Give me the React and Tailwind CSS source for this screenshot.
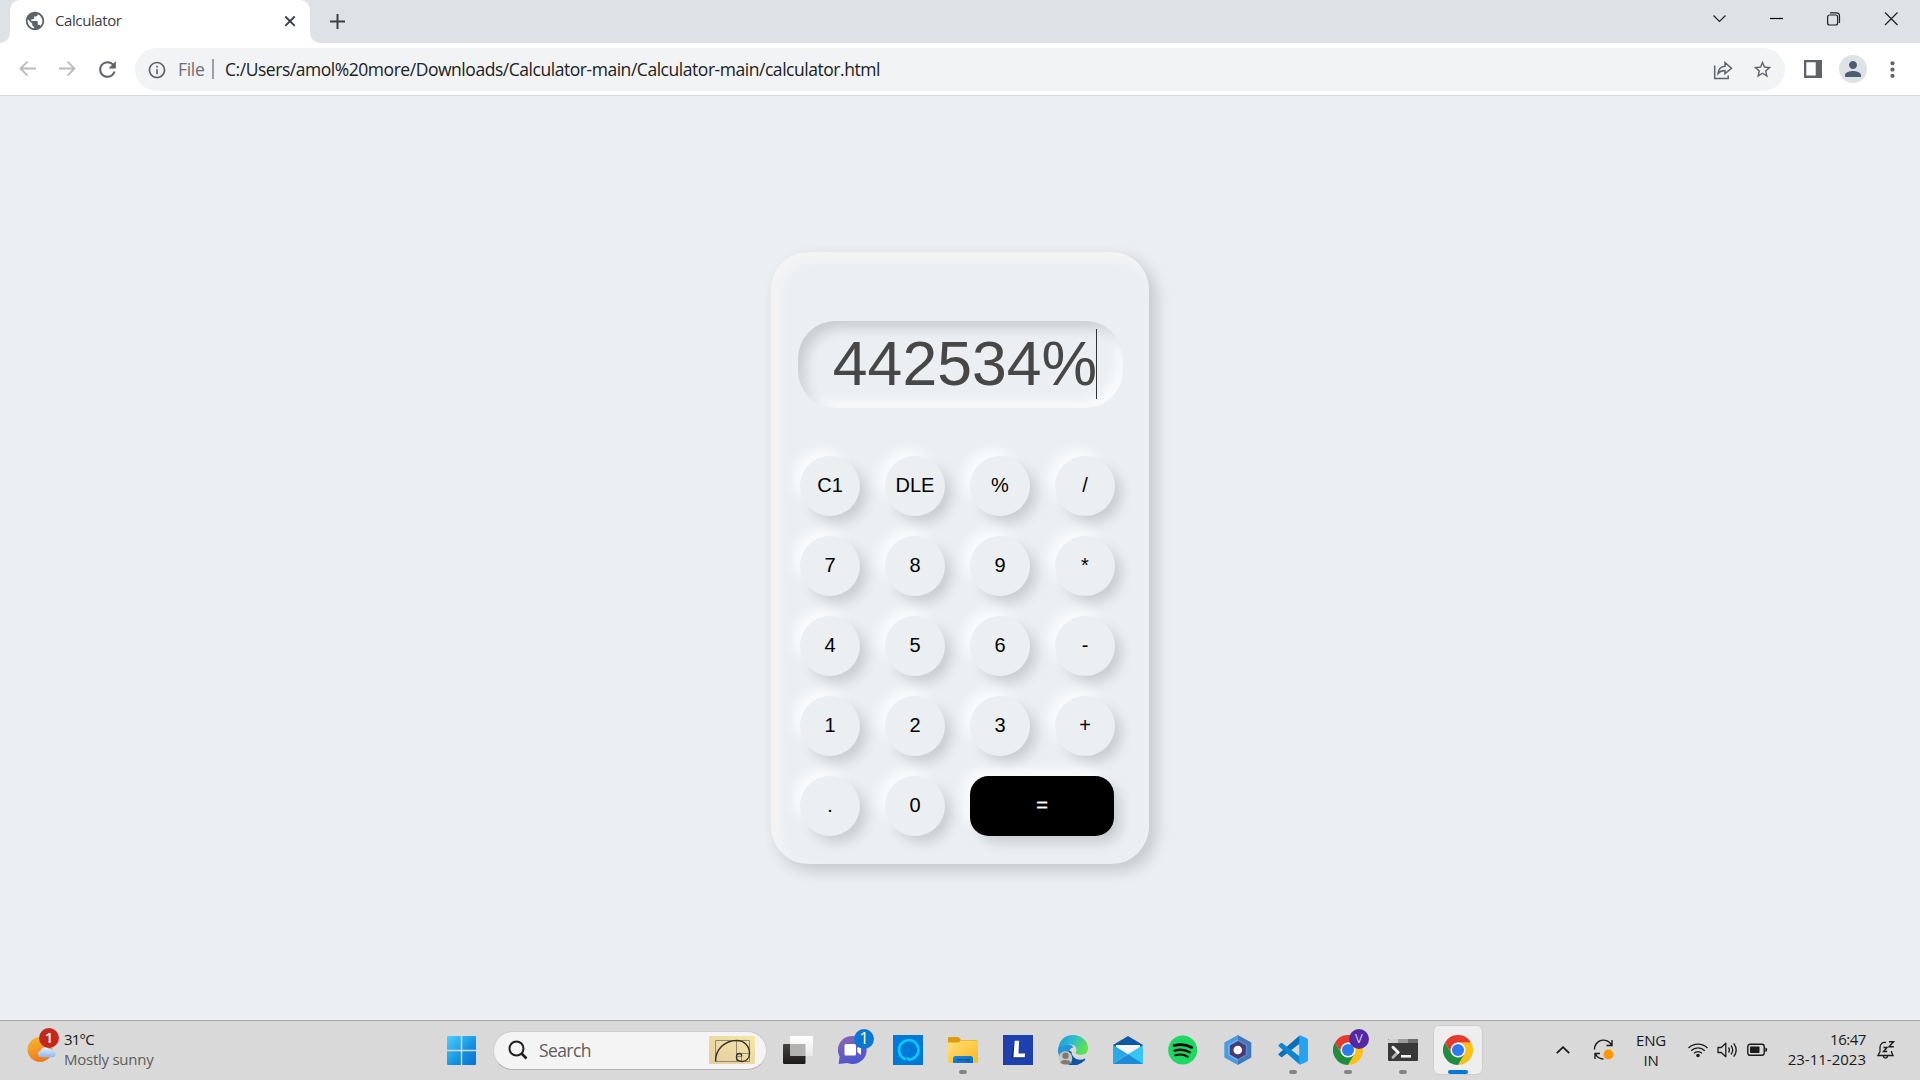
import { MdPublic, MdRefresh, MdInfoOutline, MdStarBorder, MdPerson, MdMoreVert } from "react-icons/md";

const UI = "font-['Open_Sans','Noto_Sans',sans-serif]";

function TabStrip() {
  return (
    <div className="flex h-[43px] bg-white">
      <div className="w-[10px] rounded-br-[10px] bg-[#dee1e6]" />
      <div className="w-[300px] bg-[#dee1e6]">
        <div className="flex h-full items-center rounded-t-[10px] bg-white pl-[14px] pr-[12px] pb-[1px]">
          <MdPublic className="size-[22px] text-[#5f6368]" />
          <span className="ml-[9px] pb-[2px] text-[15px] leading-5 tracking-[-0.4px] text-[#3c4043]">Calculator</span>
          <svg className="ml-auto size-4" viewBox="0 0 16 16" stroke="#3c4043" strokeWidth="1.9">
            <path d="M3.3 3.5l9.4 9.4M12.7 3.5l-9.4 9.4" />
          </svg>
        </div>
      </div>
      <div className="flex flex-1 items-center rounded-bl-[10px] bg-[#dee1e6] pl-[20px]">
        <svg className="size-[15px]" viewBox="0 0 15 15" stroke="#3c4043" strokeWidth="2">
          <path d="M7.5 0v15M0 7.5h15" />
        </svg>
        <svg className="ml-auto mb-[6px] h-[14px] w-[185px]" viewBox="0 0 185 14" fill="none" stroke="#202124" strokeWidth="1.2">
          <path d="M.5 3.5l6 6 6-6" />
          <path d="M57 6.5h13" stroke="#000" />
          <rect x="114.6" y="3" width="10" height="10" rx="2" />
          <path d="M117 .9h6.5a3 3 0 013 3v7" />
          <path d="M172 .5l12.5 12.5M184.500 .5L172 13" />
        </svg>
        <div className="w-[22px]" />
      </div>
    </div>
  );
}

function Toolbar() {
  return (
    <div className="flex h-[53px] items-start border-b border-[#d5d8dc] bg-white pt-[5px]">
      <div className="flex h-[43px] w-[135px] items-center pl-[19px]">
        <svg className="mb-[1px] h-[16px] w-[17px]" viewBox="0 0 17 16" fill="none" stroke="#babcbe" strokeWidth="1.8">
          <path d="M17 7.500H1.500M8.500.7L1.500 7.500l7 7.100" />
        </svg>
        <svg className="mb-[1px] ml-[23px] h-[16px] w-[17px]" viewBox="0 0 17 16" fill="none" stroke="#babcbe" strokeWidth="1.800">
          <path d="M0 7.500h15.500M8.500.7l7 6.800-7 7.100" />
        </svg>
        <MdRefresh className="mb-[1px] ml-[19px] size-[25px] text-[#5f6368]" />
      </div>
      <div className="flex h-[43px] w-[1650px] items-center rounded-full bg-[#f1f3f4] pl-[12px]">
        <MdInfoOutline className="size-[20px] text-[#5f6368]" />
        <span className="ml-[11px] w-[26px] pb-[1px] text-[17.5px] leading-6 tracking-[-0.3px] text-[#6b6f74]">File</span>
        <div className="mb-[2px] ml-[8px] h-[20px] w-[2px] bg-[#9aa0a6]" />
        <span className="ml-[11px] pb-[1px] text-[17.5px] leading-6 tracking-[-0.46px] whitespace-nowrap text-[#202124]">
          C:/Users/amol%20more/Downloads/Calculator-main/Calculator-main/calculator.html
        </span>
        <svg className="ml-auto size-[20px]" viewBox="0 0 20 20" fill="none" stroke="#5f6368" strokeWidth="1.500">
          <path d="M1.700 5.500v13h13.500v-3" />
          <path d="M5 13.500c.5-4.500 3-7 7-7.300V2.600l6.500 5.700-6.500 5.400V10.500c-3 0-5.200.8-7 3z" />
        </svg>
        <MdStarBorder className="ml-[19px] mr-[12px] size-[21px] text-[#5f6368]" />
      </div>
      <div className="flex h-[43px] flex-1 items-center pl-[19px]">
        <svg className="mb-[2px] h-[18px] w-[18px]" viewBox="0 0 18 18">
          <path fill="#5f6368" fillRule="evenodd" d="M0 0h18v18H0zM2.300 2.200v13.400h9.400V2.200z" />
        </svg>
        <div className="mb-[1px] ml-[17px] flex size-[28px] items-center justify-center rounded-full bg-[#dee1e6]">
          <MdPerson className="size-[24px] text-[#4c5d72]" />
        </div>
        <MdMoreVert className="mb-[1px] ml-[13px] size-[25px] text-[#5f6368]" />
      </div>
    </div>
  );
}

const KEYS = ["C1", "DLE", "%", "/", "7", "8", "9", "*", "4", "5", "6", "-", "1", "2", "3", "+", ".", "0"];
const KEY_SHADOW = "shadow-[7.5px_7.5px_12.5px_-1.25px_rgba(0,0,0,0.15),-7.5px_-7.5px_12.5px_-1.25px_rgba(255,255,255,0.8)]";

function Calculator() {
  return (
    <div className="h-[612px] w-[378px] rounded-[37.5px] bg-[#ebeff2] pt-[69px] font-['Liberation_Sans',Arial,sans-serif] shadow-[inset_6.25px_6.25px_15px_#f6f5f5,6.25px_6.25px_15px_rgba(0,0,0,0.16)]">
      <div className="ml-[27px] flex h-[87px] w-[325px] items-center justify-end rounded-[37.5px] pr-[26px] pb-[1px] text-[62.5px] leading-[70px] text-[#474747] shadow-[inset_7.5px_7.5px_12.5px_-1.25px_rgba(0,0,0,0.15),inset_-7.5px_-7.5px_12.5px_-1.25px_rgba(255,255,255,0.8)]">
        <span className="pb-[2px]">442534%</span>
        <div className="-ml-px h-[70px] w-px bg-[#333]" />
      </div>
      <div className="mt-[48px] ml-[29px] grid grid-cols-[repeat(4,60px)] gap-x-[25px] gap-y-[20px] text-[20px] leading-[23px] text-black">
        {KEYS.map((k) => (
          <button key={k} className={`size-[60px] rounded-full bg-[#ebeff2] pb-[2px] ${KEY_SHADOW}`}>{k}</button>
        ))}
        <button className={`h-[60px] w-[144px] rounded-[18.75px] bg-black pb-[2px] text-white [-webkit-text-stroke:0.4px_white] ${KEY_SHADOW}`}>=</button>
      </div>
    </div>
  );
}

const icon = "size-[30px]";

function ChromeIcon() {
  return (
    <svg className={icon} viewBox="0 0 48 48">
      <path fill="#fbc116" d="M24 48A24 24 0 0044.800 12L24 12 34.400 30z" />
      <path fill="#1e8e3e" d="M3.200 12A24 24 0 0024 48L34.400 30 13.600 30z" />
      <path fill="#e33b2e" d="M3.200 12A24 24 0 0144.800 12L24 12 13.600 30z" />
      <circle cx="24" cy="24" r="12" fill="#fff" />
      <circle cx="24" cy="24" r="9.700" fill="#2b7bf0" />
    </svg>
  );
}

function TaskViewIcon() {
  return (
    <svg className={icon} viewBox="0 0 30 30">
      <defs>
        <linearGradient id="tvd" x2="0" y2="1"><stop stopColor="#45433f" /><stop offset="1" stopColor="#1c1b1a" /></linearGradient>
        <linearGradient id="tvl" x2="0" y2="1"><stop stopColor="#fff" /><stop offset="1" stopColor="#e9e9e9" /></linearGradient>
      </defs>
      <rect x="0" y="9" width="22.500" height="20" rx="1.200" fill="url(#tvd)" />
      <rect x="7" y="1" width="23" height="20" rx="1.200" fill="url(#tvl)" />
      <path d="M7 9h15.500v12H8.200A1.200 1.200 0 017 19.800z" fill="#b3b2b1" />
    </svg>
  );
}

function ChatIcon() {
  return (
    <svg className={icon} viewBox="0 0 30 30">
      <defs>
        <linearGradient id="chat" x2=".4" y2="1"><stop stopColor="#8b68b0" /><stop offset="1" stopColor="#4f55d0" /></linearGradient>
      </defs>
      <path d="M15 1a14 14 0 11-5.500 27L.6 29l1-7.500A14 14 0 0115 1z" fill="url(#chat)" />
      <rect x="6.500" y="9" width="11.500" height="11.500" rx="1.500" fill="#fff" />
      <path d="M19.300 13l3.700-3v10l-3.700-3z" fill="#fff" />
    </svg>
  );
}

function AlexaIcon() {
  return (
    <svg className={icon} viewBox="0 0 30 30">
      <path fill="#0078d7" d="M0 0h30v30H0z" />
      <path d="M13 24.200A9.700 9.700 0 1115.500 24.600Q15 24.700 14.500 22.500" fill="none" stroke="#06cbfb" strokeWidth="2.600" />
    </svg>
  );
}

function FolderIcon() {
  return (
    <svg className={icon} viewBox="0 0 30 30">
      <defs>
        <linearGradient id="fold" x2="1" y2="1"><stop stopColor="#ffe07c" /><stop offset="1" stopColor="#fbb91c" /></linearGradient>
        <linearGradient id="tray" x2="1" y2="1"><stop stopColor="#1b8be0" /><stop offset="1" stopColor="#0b66b8" /></linearGradient>
      </defs>
      <path d="M0 3.200Q0 2 1.200 2h9.300l2.500 3H29v5H0z" fill="#df9b0a" />
      <path d="M0 7.500h10.500L13 5.500h17v22.300H0z" fill="url(#fold)" />
      <path d="M5 28v-4.500Q5 21 7.500 21h15q2.500 0 2.500 2.500V28z" fill="url(#tray)" />
      <path d="M8.500 24.700h13" stroke="#0a4f8c" strokeWidth="1.200" />
    </svg>
  );
}

function LIcon() {
  return (
    <svg className={icon} viewBox="0 0 30 30">
      <path fill="#1e3fae" d="M0 0h30v30H0z" />
      <path fill="#182d52" d="M11.500 6L8.500 23l11 .5 2.500-1.500-8-1z" />
      <path fill="#fff" d="M11.700 5.800h4.400l-.6 12.600h6.600l-.4 3.900H10.400z" />
    </svg>
  );
}

function EdgeIcon() {
  return (
    <svg className={icon} viewBox="0 0 30 30">
      <defs>
        <linearGradient id="edg" x2="1" y2=".4"><stop stopColor="#1c94e0" /><stop offset=".5" stopColor="#2bbcd0" /><stop offset="1" stopColor="#5fe04e" /></linearGradient>
      </defs>
      <path d="M2 9a14.800 14.800 0 00-.5 12A15 15 0 0026 26c1.500-1.200 1.500-2 1-2.500-6 3-13 0-13.500-6.500z" fill="#1055a0" />
      <path d="M.5 12.500C2 4 8 0 15 0c8.500 0 15 6 15 13 0 5-3.500 7-7.500 7-4 0-5.800-1.500-4.500-3.200C20 13 16.500 9.500 12 9.500c-5 0-9 2-11.900 5z" fill="url(#edg)" />
      <path d="M0 15c3-3.500 6-5.500 10-5.500 3 0 5 1.500 5.500 3-4 .5-6 5-4 10l3 6C6 29.500 0 23 0 15z" fill="#2495dc" />
      <path d="M15.500 12.300c2.300 1 2.800 2.800 1.900 4.400-1 2.500 5 4.200 10.200 2.300l.4 2.200c-4.500 1.800-10 .8-12.500-2.200-1.800-2.200-1.700-5 0-6.700z" fill="#d9d9d9" />
      <circle cx="7.500" cy="23" r="6.800" fill="#c9c7c5" />
      <circle cx="7.500" cy="20.700" r="3.200" fill="#7f7a76" />
      <path d="M2.500 28q0-3 5-3t5 3q-5 3-10 0z" fill="#7f7a76" />
    </svg>
  );
}

function MailIcon() {
  return (
    <svg className={icon} viewBox="0 0 30 30">
      <path d="M0 10L15 1l15 9v5H0z" fill="#0b59a4" />
      <path d="M3 10h24v10H3z" fill="#f4f4f4" />
      <path d="M30 10v19H15V19.200z" fill="#36c5f4" />
      <path d="M0 29L15 19.200 30 29z" fill="#1d8ad8" />
      <path d="M0 10l15 9.200L0 29z" fill="#2ba8e6" />
    </svg>
  );
}

function SpotifyIcon() {
  return (
    <svg className={icon} viewBox="0 0 30 30" fill="none" stroke="#0a0a0a" strokeLinecap="round">
      <circle cx="14.700" cy="15" r="14.500" fill="#1ed760" stroke="none" />
      <path d="M6 10.600c6-1.700 12.500-1.100 17.800 1.800" strokeWidth="2.800" />
      <path d="M6.700 15.600c5-1.400 10.500-.9 15 1.600" strokeWidth="2.400" />
      <path d="M7.300 20.200c4.300-1.100 8.800-.7 12.400 1.400" strokeWidth="2" />
    </svg>
  );
}

function HexIcon() {
  return (
    <svg className={icon} viewBox="0 0 30 30">
      <path d="M14.800 0v30L1.300 22.500v-15z" fill="#4a9ae0" />
      <path d="M14.800 0v30l13.500-7.500v-15z" fill="#4377b8" />
      <path d="M14.800 4.500v21L5.300 20.300V9.700z" fill="#72b5ec" />
      <path d="M14.800 4.500v21l9.500-5.200V9.700z" fill="#5b8cc8" />
      <path d="M14.800 6l8 4.500v9l-8 4.500-8-4.500v-9z" fill="#463b78" />
      <circle cx="14.800" cy="15" r="4.300" fill="#fff" />
    </svg>
  );
}

function CodeIcon() {
  return (
    <svg className={icon} viewBox="0 0 30 30">
      <path d="M1 18.500L21.500.400 22.500 8 4.500 21.800q-1 .7-1.800 0L.7 20q-.8-.8.300-1.500z" fill="#0a6fb8" />
      <path d="M1 11.500L21.500 29.600 22.500 22 4.500 8.200q-1-.7-1.800 0L.7 10q-.8.800.300 1.500z" fill="#0d85d0" />
      <path d="M22 .200l6.800 3.100q1.200.6 1.200 1.900v19.600q0 1.300-1.200 1.900L22 29.800q-.8-.2-.8-1.300v-27q0-1.100.8-1.300z" fill="#25a2f0" />
    </svg>
  );
}

function TerminalIcon() {
  return (
    <svg className={icon} viewBox="0 0 30 30">
      <rect y="4" width="30" height="22" rx="1.200" fill="#383838" />
      <path d="M1 4h9v4H0V5z" fill="#cfcfcf" />
      <path d="M10 4h10v4H10z" fill="#9a9a9a" />
      <path d="M20 4h9l1 1v3H20z" fill="#6c6c6c" />
      <path d="M10 17.300l-5 5" stroke="#b5b5b5" strokeWidth="3" strokeLinecap="round" />
      <path d="M5 12.300l5 5" stroke="#f2f2f2" strokeWidth="3" strokeLinecap="round" />
      <path d="M13 21.300h10" stroke="#f2f2f2" strokeWidth="2.600" />
    </svg>
  );
}

const APPS = [
  { Icon: TaskViewIcon },
  { Icon: ChatIcon, badge: "1", badgeColor: "bg-[#0b78d0] text-[16px] text-white" },
  { Icon: AlexaIcon },
  { Icon: FolderIcon, running: true },
  { Icon: LIcon },
  { Icon: EdgeIcon },
  { Icon: MailIcon },
  { Icon: SpotifyIcon },
  { Icon: HexIcon },
  { Icon: CodeIcon, running: true },
  { Icon: ChromeIcon, running: true, badge: "V", badgeColor: "bg-[#5228a3] text-[13px] text-[#d9c8f5]" },
  { Icon: TerminalIcon, running: true },
  { Icon: ChromeIcon, active: true },
];

function AppSlot({ Icon, badge, badgeColor, running, active }) {
  return (
    <div className={`relative flex h-[48px] w-[48px] flex-col items-center rounded-[5px] pt-[9px] ${active ? "bg-[#eeeeee] shadow-[0_0_0_0.5px_rgba(0,0,0,0.1)]" : ""}`}>
      <Icon />
      {badge && (
        <span className={`absolute top-[2.5px] right-[3px] flex size-[20px] items-center justify-center rounded-full pb-px leading-none ${badgeColor}`}>{badge}</span>
      )}
      {running && <div className="mt-[5px] h-[4px] w-[8px] rounded-full bg-[#858585]" />}
      {active && <div className="mt-[5px] h-[4px] w-[20px] rounded-full bg-[#0078d7]" />}
    </div>
  );
}

function Taskbar() {
  return (
    <div className="flex h-[60px] items-center border-t border-[#a8abae] bg-[#d9d9d9] pb-[1px]">
      <div className="flex w-[437px] items-center">
        <div className="relative mb-[11px] ml-[27px] h-[34px] w-[32px]">
          <svg className="h-[34px] w-[32px]" viewBox="0 0 32 34">
            <defs>
              <linearGradient id="sun" x2=".3" y2="1"><stop stopColor="#f2bd35" /><stop offset="1" stopColor="#f37a17" /></linearGradient>
              <linearGradient id="cld" x2="0" y2="1"><stop stopColor="#e4effc" /><stop offset="1" stopColor="#8fb6ee" /></linearGradient>
            </defs>
            <circle cx="13" cy="21.500" r="12.500" fill="url(#sun)" />
            <path d="M14 29.300a3.300 3.300 0 01-.5-6.500 5 5 0 018.500-2 3 3 0 014 2 3.300 3.300 0 01-.5 6.500z" fill="url(#cld)" />
          </svg>
          <span className="absolute top-0 right-0 flex size-[20px] items-center justify-center rounded-full bg-[#c4281c] pb-px text-[15px] leading-none font-semibold text-white">1</span>
        </div>
        <div className="ml-[5px] pb-[3px] text-[15px] leading-[20px]">
          <div className="tracking-[-0.8px] text-[#1b1b1b]">31°C</div>
          <div className="tracking-[-0.25px] text-[#5c5c5c]">Mostly sunny</div>
        </div>
      </div>
      <div className="flex h-[48px] w-[48px] items-center justify-center">
        <svg className="size-[29px]" viewBox="0 0 29 29">
          <defs>
            <linearGradient id="win" x2="1" y2="1" gradientUnits="userSpaceOnUse" gradientTransform="scale(29)"><stop stopColor="#4fd0fb" /><stop offset=".6" stopColor="#1290e2" /><stop offset="1" stopColor="#0671cd" /></linearGradient>
          </defs>
          <path d="M0 1q0-1 1-1h12.800v13.800H0zM15.200 0H28q1 0 1 1v12.800H15.200zM0 15.200h13.800V29H1q-1 0-1-1zM15.200 15.200H29V28q0 1-1 1H15.200z" fill="url(#win)" />
        </svg>
      </div>
      <div className="ml-[8px] flex h-[39px] w-[274px] items-center rounded-full border border-[#cdcdcd] border-b-[#b3b3b3] bg-[#f4f4f4] pr-[11px] pl-[14px]">
        <svg className="size-[20px]" viewBox="0 0 20 20" fill="none" stroke="#1f1f1f" strokeWidth="2">
          <circle cx="8.500" cy="8.500" r="7" />
          <path d="M13.500 13.500l5 5" strokeWidth="2.600" />
        </svg>
        <span className="ml-[11px] text-[17.5px] leading-6 tracking-[-0.6px] text-[#5c5c5c]">Search</span>
        <svg className="ml-auto h-[28px] w-[46px]" viewBox="0 0 46 28" fill="none">
          <defs>
            <linearGradient id="gold" x1="0" y1="1" x2="1" y2="0"><stop stopColor="#e6cda0" /><stop offset="1" stopColor="#f6e6a6" /></linearGradient>
          </defs>
          <rect width="46" height="28" rx="1" fill="url(#gold)" />
          <path d="M6.500 4.500h34v21h-34zM27.500 4.500v21M27.500 17.500h13M32.500 17.500v8M27.500 20.500h5" stroke="#8f8a78" strokeWidth="1" />
          <path d="M6.500 25.500C6.500 13 16 4.500 27.500 4.500c8 0 13 5.500 13 13 0 5-3.500 8-7.500 8-3.500 0-5.500-2-5.500-4.500s1.500-3.500 3-3.500 2.500 1 2 3" stroke="#33322e" strokeWidth="1.400" />
        </svg>
      </div>
      <div className="ml-[7px] flex gap-[7px]">
        {APPS.map((a, i) => <AppSlot key={i} {...a} />)}
      </div>
      <div className="ml-auto flex items-center text-[#1b1b1b]">
        <svg className="h-[8px] w-[14px]" viewBox="0 0 14 8" fill="none" stroke="#1b1b1b" strokeWidth="1.800"><path d="M.8 7.200L7 1.200l6.200 6" /></svg>
        <svg className="ml-[23px] size-[22px]" viewBox="0 0 22 22" fill="none" stroke="#1b1b1b" strokeWidth="1.400">
          <path d="M1.500 10.500a9 9 0 0117-4.500M19 1v5.500h-5.500M2 20v-5.500h5M2.500 15a9 9 0 008 5" />
          <circle cx="15.500" cy="15.500" r="5" fill="#ff9800" stroke="none" />
        </svg>
        <div className="ml-[21px] flex w-[30px] flex-col items-center text-[15px] leading-[20px] tracking-[-0.2px]">
          <span>ENG</span>
          <span>IN</span>
        </div>
        <svg className="ml-[21px] h-[16px] w-[22px]" viewBox="0 0 22 16" fill="none" stroke="#1b1b1b" strokeWidth="1.300">
          <path d="M1.500 6a13.500 13.500 0 0119 0M4.200 8.700a9.600 9.600 0 0113.600 0M6.900 11.400a5.800 5.800 0 018.200 0" />
          <circle cx="11" cy="13.500" r="1.800" fill="#1b1b1b" stroke="none" />
        </svg>
        <svg className="ml-[8px] h-[16px] w-[21px]" viewBox="0 0 21 16" fill="none" stroke="#1b1b1b" strokeWidth="1.300">
          <path d="M1 5.500h3.200L8.800 1.300v13.400l-4.600-4.200H1z" strokeLinejoin="round" />
          <path d="M11.500 5.500q1.800 2.500 0 5M14 3.500q3.500 4.500 0 9M16.700 1.300q5 6.700 0 13.400" />
        </svg>
        <svg className="ml-[9px] h-[14px] w-[21px]" viewBox="0 0 21 14">
          <rect x=".8" y="1.300" width="16.400" height="11" rx="2.200" fill="none" stroke="#1b1b1b" strokeWidth="1.400" />
          <rect x="3" y="3.500" width="9.500" height="6.600" rx=".8" fill="#1b1b1b" />
          <path d="M18.300 4.500q2 .3 2 2.300t-2 2.300z" fill="#1b1b1b" />
        </svg>
        <div className="ml-[20px] flex w-[78px] flex-col items-end pb-[2px] text-[15px] leading-[20px] whitespace-nowrap">
          <span className="tracking-[-0.45px]">16:47</span>
          <span>23-11-2023</span>
        </div>
        <svg className="mr-[25px] ml-[11px] size-[18px]" viewBox="0 0 18 18" fill="none" stroke="#1b1b1b" strokeWidth="1.300">
          <path d="M9 1.500C5 .8 3 3.500 3 6.500v4L1 14.500h15l-1.500-3.500V10M6.300 15q.5 2.200 2.200 2.200t2.200-2.200" />
          <path d="M6.500 6.500h3.500l-3.500 4H10.200M12 .8h4.500L12 5.800h4.800" strokeWidth="1.400" />
        </svg>
      </div>
    </div>
  );
}

export default function App() {
  return (
    <div className={`flex h-[1080px] w-[1920px] flex-col overflow-hidden bg-[#ebeff2] ${UI}`}>
      <TabStrip />
      <Toolbar />
      <div className="flex flex-1 items-center justify-center">
        <Calculator />
      </div>
      <Taskbar />
    </div>
  );
}
